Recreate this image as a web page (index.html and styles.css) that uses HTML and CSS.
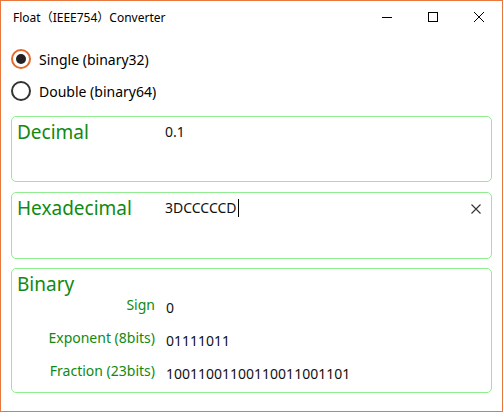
FILE: index.html
```html
<!DOCTYPE html>
<html>
<head>
<meta charset="utf-8">
<link rel="stylesheet" href="styles.css">
</head>
<body>
<div class="window">
  <div class="titlebar">
    <span class="title">Float（IEEE754）Converter</span>
    <div class="controls">
      <span class="ctl"><svg width="10" height="10" viewBox="0 0 10 10"><path d="M0 5.5H10" stroke="#000" stroke-width="1"/></svg></span>
      <span class="ctl"><svg width="10" height="10" viewBox="0 0 10 10"><rect x="0.5" y="0.5" width="9" height="9" fill="none" stroke="#000" stroke-width="1"/></svg></span>
      <span class="ctl"><svg width="10" height="10" viewBox="0 0 10 10"><path d="M0 0L10 10M10 0L0 10" stroke="#000" stroke-width="1"/></svg></span>
    </div>
  </div>
  <div class="content">
    <div class="radios">
      <label class="radio checked"><span class="dot"></span>Single (binary32)</label>
      <label class="radio"><span class="dot"></span>Double (binary64)</label>
    </div>
    <div class="card card-dec">
      <div class="heading">Decimal</div>
      <div class="value">0.1</div>
    </div>
    <div class="card card-hex">
      <div class="heading">Hexadecimal</div>
      <div class="value">3DCCCCCD<span class="caret"></span></div>
      <span class="clear"><svg width="10" height="10" viewBox="0 0 10 10"><path d="M0.5 0.5L9.5 9.5M9.5 0.5L0.5 9.5" stroke="#333" stroke-width="1.1"/></svg></span>
    </div>
    <div class="card card-bin">
      <div class="heading">Binary</div>
      <div class="rows">
        <div class="label">Sign</div><div class="bits">0</div>
        <div class="label">Exponent (8bits)</div><div class="bits">01111011</div>
        <div class="label">Fraction (23bits)</div><div class="bits">10011001100110011001101</div>
      </div>
    </div>
  </div>
</div>
</body>
</html>
```
FILE: styles.css
```css
* { box-sizing: border-box; }
html, body { margin: 0; padding: 0; background: #fff; }
body { font-family: "Noto Sans", "Noto Sans CJK SC", sans-serif; color: #111; }
.window {
  width: 503px; height: 412px;
  border: 1px solid #e8773e;
  background: #fff;
  display: flex; flex-direction: column;
}
.titlebar {
  height: 31px;
  display: flex; align-items: center; justify-content: space-between;
  padding-left: 12px;
}
.title { font-size: 12px; color: #000; }
.controls { display: flex; height: 100%; }
.ctl {
  width: 46px; height: 100%;
  display: flex; align-items: center; justify-content: center;
}
.content { padding: 11px 10px 0 10px; display: flex; flex-direction: column; }
.radios { display: flex; flex-direction: column; margin-bottom: 9px; }
.radio {
  height: 32px; display: flex; align-items: center;
  font-size: 14px; color: #000;
}
.radio .dot {
  width: 20px; height: 20px; border-radius: 50%;
  border: 2px solid #333; margin-right: 8px;
  display: flex; align-items: center; justify-content: center;
}
.radio.checked .dot { border-color: #e4692c; }
.radio.checked .dot::after {
  content: ""; width: 10px; height: 10px; border-radius: 50%; background: #222;
}
.card {
  border: 1px solid #90ee90; border-radius: 5px;
  position: relative;
  margin-bottom: 10px;
}
.card-dec, .card-hex {
  display: grid; grid-template-columns: 148px 1fr;
  padding: 2px 5px 0 5px;
}
.card-dec { height: 66px; }
.card-hex { height: 67px; margin-bottom: 9px; }
.heading { font-size: 19px; color: #108a10; line-height: 26px; }
.value { font-size: 14px; color: #111; padding-top: 2px; line-height: 22px; display: flex; align-items: center; height: 24px; }
.caret { display: inline-block; width: 1px; height: 18px; background: #000; margin-left: 1px; }
.clear { position: absolute; right: 10px; top: 11px; line-height: 0; }
.card-bin { height: 125px; padding: 2px 5px 0 5px; }
.rows {
  display: grid; grid-template-columns: 138px 1fr;
  column-gap: 11px; row-gap: 8px;
  margin-top: -3px;
}
.label { font-size: 14px; color: #108a10; text-align: right; line-height: 22px; }
.bits { font-size: 14px; color: #111; line-height: 22px; padding-top: 3px; }
```
